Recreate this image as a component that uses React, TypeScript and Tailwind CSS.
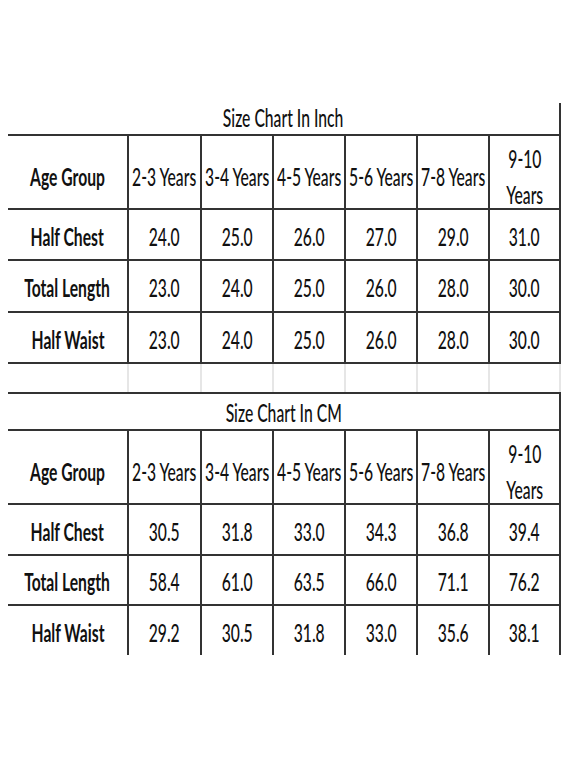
import React from 'react';

const headers = ['2-3 Years', '3-4 Years', '4-5 Years', '5-6 Years', '7-8 Years'];

const inchRows = [
  { label: 'Half Chest', values: ['24.0', '25.0', '26.0', '27.0', '29.0', '31.0'], h: 'h-[51px]' },
  { label: 'Total Length', values: ['23.0', '24.0', '25.0', '26.0', '28.0', '30.0'], h: 'h-[52px]' },
  { label: 'Half Waist', values: ['23.0', '24.0', '25.0', '26.0', '28.0', '30.0'], h: 'h-[51px]' },
];

const cmRows = [
  { label: 'Half Chest', values: ['30.5', '31.8', '33.0', '34.3', '36.8', '39.4'], h: 'h-[51px]' },
  { label: 'Total Length', values: ['58.4', '61.0', '63.5', '66.0', '71.1', '76.2'], h: 'h-[50px]' },
  { label: 'Half Waist', values: ['29.2', '30.5', '31.8', '33.0', '35.6', '38.1'], h: 'h-[49px]' },
];

const grid = 'grid grid-cols-[119px_73px_72px_72px_72px_72px_71px]';

const Txt: React.FC<{ children: React.ReactNode; bold?: boolean }> = ({ children, bold }) => (
  <span
    className={
      bold
        ? 'inline-block scale-x-[0.64] whitespace-nowrap font-bold'
        : 'inline-block scale-x-[0.64] whitespace-nowrap font-medium'
    }
  >
    {children}
  </span>
);

const Cell: React.FC<{ children?: React.ReactNode; first?: boolean }> = ({ children, first }) => (
  <div
    className={
      first
        ? 'flex items-center justify-center pt-[5px]'
        : 'flex items-center justify-center pt-[5px] border-l-2 border-[#333]'
    }
  >
    {children}
  </div>
);

const Header: React.FC = () => (
  <div className={`${grid} h-[74px] border-b-2 border-[#333]`}>
    <Cell first>
      <Txt bold>Age Group</Txt>
    </Cell>
    {headers.map((h) => (
      <Cell key={h}>
        <Txt>{h}</Txt>
      </Cell>
    ))}
    <Cell>
      <div className="flex flex-col items-center leading-[36px]">
        <Txt>9-10</Txt>
        <Txt>Years</Txt>
      </div>
    </Cell>
  </div>
);

type Row = { label: string; values: string[]; h: string };

const Body: React.FC<{ rows: Row[]; lastBorder: boolean }> = ({ rows, lastBorder }) => (
  <>
    {rows.map((r, i) => (
      <div
        key={r.label}
        className={
          i < rows.length - 1 || lastBorder
            ? `${grid} ${r.h} border-b-2 border-[#333]`
            : `${grid} ${r.h}`
        }
      >
        <Cell first>
          <Txt bold>{r.label}</Txt>
        </Cell>
        {r.values.map((v, j) => (
          <Cell key={j}>
            <Txt>{v}</Txt>
          </Cell>
        ))}
      </div>
    ))}
  </>
);

export default function App() {
  return (
    <div className="w-[570px] h-[757px] bg-white pt-[103px] pl-[8px] font-['Lato',sans-serif] text-[24.5px] text-[#111]">
      {/* inch table */}
      <div className="w-[553px] border-r-2 border-[#333]">
        <div className="h-[33px] border-b-2 border-[#333] flex items-center justify-center">
          <Txt>Size Chart In Inch</Txt>
        </div>
        <Header />
        <Body rows={inchRows} lastBorder />
      </div>
      <div className={`${grid} w-[553px] h-[28px] border-r-2 border-[#e6e6e6]`}>
        <div />
        {[0, 1, 2, 3, 4, 5].map((k) => (
          <div key={k} className="border-l-2 border-[#e6e6e6]" />
        ))}
      </div>

      {/* cm table */}
      <div className="w-[553px] border-r-2 border-t-2 border-[#333]">
        <div className="h-[37px] pt-[3px] border-b-2 border-[#333] flex items-center justify-center">
          <Txt>Size Chart In CM</Txt>
        </div>
        <Header />
        <Body rows={cmRows} lastBorder={false} />
      </div>
    </div>
  );
}
